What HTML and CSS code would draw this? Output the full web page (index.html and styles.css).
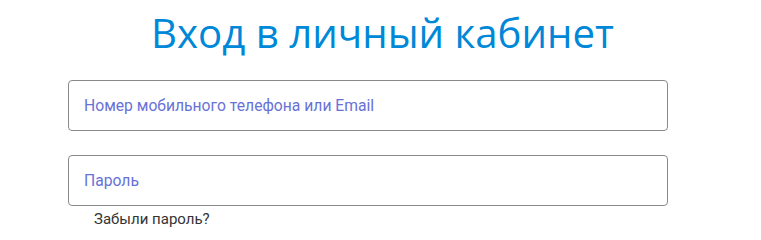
FILE: index.html
```html
<!DOCTYPE html>
<html lang="ru">
<head>
<meta charset="utf-8">
<title>Вход в личный кабинет</title>
<link rel="stylesheet" href="styles.css">
</head>
<body>
<main class="page">
  <h1 class="title">Вход в личный кабинет</h1>
  <form class="form">
    <div class="field"><span class="placeholder">Номер мобильного телефона или Email</span></div>
    <div class="field field-second"><span class="placeholder">Пароль</span></div>
    <a class="forgot" href="#">Забыли пароль?</a>
  </form>
</main>
</body>
</html>
```
FILE: styles.css
```css
html, body {
  margin: 0;
  padding: 0;
  background: #ffffff;
}
.page {
  width: 761px;
}
.title {
  margin: 0;
  padding-top: 9px;
  padding-left: 4px;
  font-family: "Open Sans", "Noto Sans", sans-serif;
  font-weight: 400;
  font-size: 40.2px;
  line-height: 48px;
  color: #0088d8;
  text-align: center;
}
.form {
  margin: 23px 0 0 68px;
  width: 600px;
  display: flex;
  flex-direction: column;
  align-items: stretch;
}
.field {
  box-sizing: border-box;
  height: 51px;
  border: 1px solid #8a8a8a;
  border-radius: 4px;
  padding: 0 15px;
  display: flex;
  align-items: center;
}
.field-second {
  margin-top: 24px;
}
.placeholder {
  font-family: Roboto, "Liberation Sans", sans-serif;
  font-size: 15.7px;
  color: #6872d6;
}
.forgot {
  margin-top: 4px;
  padding-left: 26px;
  font-family: Roboto, "Liberation Sans", sans-serif;
  font-size: 15px;
  color: #333333;
  text-decoration: none;
}
```
